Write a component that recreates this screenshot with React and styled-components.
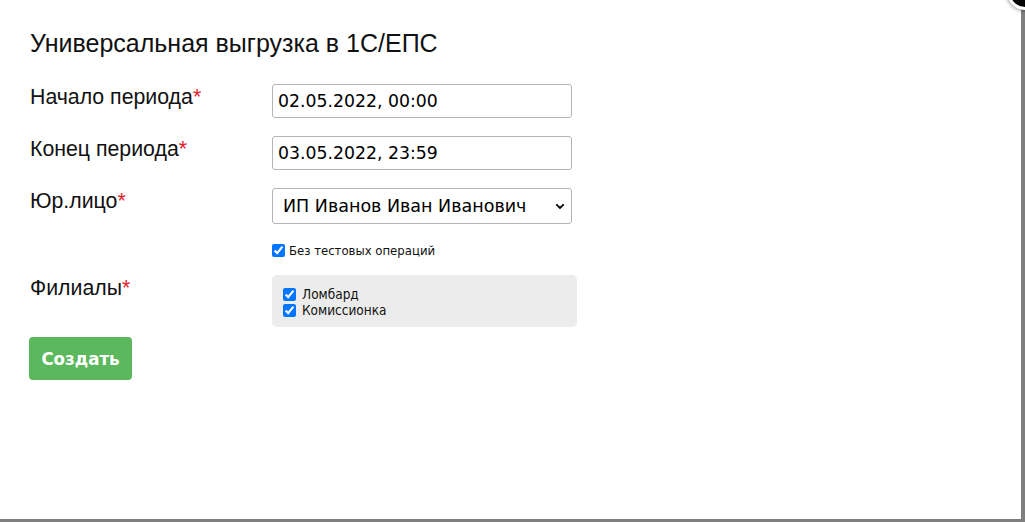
import React from "react";
import styled, { createGlobalStyle } from "styled-components";

const Global = createGlobalStyle`
  html, body { margin: 0; padding: 0; }
  body { background: #7f7f7f; overflow: hidden; width: 1025px; height: 522px; }
`;

const Modal = styled.div`
  position: relative;
  width: 1021px;
  height: 519px;
  background: #fff;
  box-sizing: border-box;
  padding: 28px 29px 0 30px;
  font-family: "Liberation Sans", Arial, sans-serif;
  color: #111;
`;

const Close = styled.div`
  position: absolute;
  top: -26px;
  right: -22px;
  width: 30px;
  height: 30px;
  border-radius: 50%;
  background: #000;
  border: 3px solid #fff;
  box-shadow: 0 0 4px rgba(0,0,0,0.6);
`;

const Title = styled.h1`
  margin: 0 0 26px 0;
  font-size: 25px;
  font-weight: normal;
  line-height: 30px;
`;

const Form = styled.div`
  display: grid;
  grid-template-columns: 242px 306px;
  align-items: start;
`;

const Label = styled.label`
  font-size: 21.3px;
  line-height: 26px;
`;

const Star = styled.span`
  color: #e4202c;
`;

const TextInput = styled.input`
  width: 300px;
  height: 34px;
  box-sizing: border-box;
  border: 1px solid #b5b5b5;
  border-radius: 3px;
  padding: 0 5px;
  font-family: "DejaVu Sans", sans-serif;
  font-size: 17.3px;
  color: #000;
  margin-bottom: 18px;
  outline: none;
`;

const SelectWrap = styled.div`
  position: relative;
  width: 300px;
  height: 36px;
  box-sizing: border-box;
  border: 1px solid #b5b5b5;
  border-radius: 3px;
  display: flex;
  align-items: center;
  padding-left: 10px;
  font-family: "DejaVu Sans", sans-serif;
  font-size: 17.5px;
  color: #000;
`;

const Chevron = styled.svg`
  position: absolute;
  right: 6px;
  top: 14px;
`;

const Empty = styled.div``;

const CheckLine = styled.label`
  display: flex;
  align-items: center;
  gap: 4px;
  margin-top: 19px;
  margin-bottom: 17px;
  font-family: "DejaVu Sans Condensed", "DejaVu Sans", sans-serif;
  font-size: 13px;
  color: #111;
`;

const Box = styled.input`
  width: 13px;
  height: 13px;
  margin: 0;
  accent-color: #0075ff;
`;

const Branches = styled.div`
  width: 305px;
  height: 52px;
  box-sizing: border-box;
  background: #ececec;
  border-radius: 5px;
  padding: 12px 11px;
  display: flex;
  flex-direction: column;
  gap: 2px;
`;

const BranchLine = styled.label`
  display: flex;
  align-items: center;
  gap: 6px;
  font-family: "DejaVu Sans Condensed", "DejaVu Sans", sans-serif;
  font-size: 13.5px;
  line-height: 14px;
  color: #111;
`;

const Button = styled.button`
  margin-top: 10px;
  margin-left: -1px;
  width: 103px;
  height: 43px;
  border: none;
  border-radius: 4px;
  background: #5cb85c;
  color: #fff;
  font-family: "DejaVu Sans Condensed", "DejaVu Sans", sans-serif;
  font-weight: bold;
  font-size: 18.5px;
`;

export default function App() {
  return (
    <>
      <Global />
      <Modal>
        <Close />
        <Title>Универсальная выгрузка в 1С/ЕПС</Title>
        <Form>
          <Label>Начало периода<Star>*</Star></Label>
          <TextInput defaultValue="02.05.2022, 00:00" />
          <Label>Конец периода<Star>*</Star></Label>
          <TextInput defaultValue="03.05.2022, 23:59" />
          <Label>Юр.лицо<Star>*</Star></Label>
          <SelectWrap>
            ИП Иванов Иван Иванович
            <Chevron width="10" height="7" viewBox="0 0 10 7">
              <path d="M1.3 1.3 L5 5 L8.7 1.3" fill="none" stroke="#000" strokeWidth="1.8" />
            </Chevron>
          </SelectWrap>
          <Empty />
          <CheckLine><Box type="checkbox" defaultChecked />Без тестовых операций</CheckLine>
          <Label>Филиалы<Star>*</Star></Label>
          <Branches>
            <BranchLine><Box type="checkbox" defaultChecked />Ломбард</BranchLine>
            <BranchLine><Box type="checkbox" defaultChecked />Комиссионка</BranchLine>
          </Branches>
        </Form>
        <Button>Создать</Button>
      </Modal>
    </>
  );
}
